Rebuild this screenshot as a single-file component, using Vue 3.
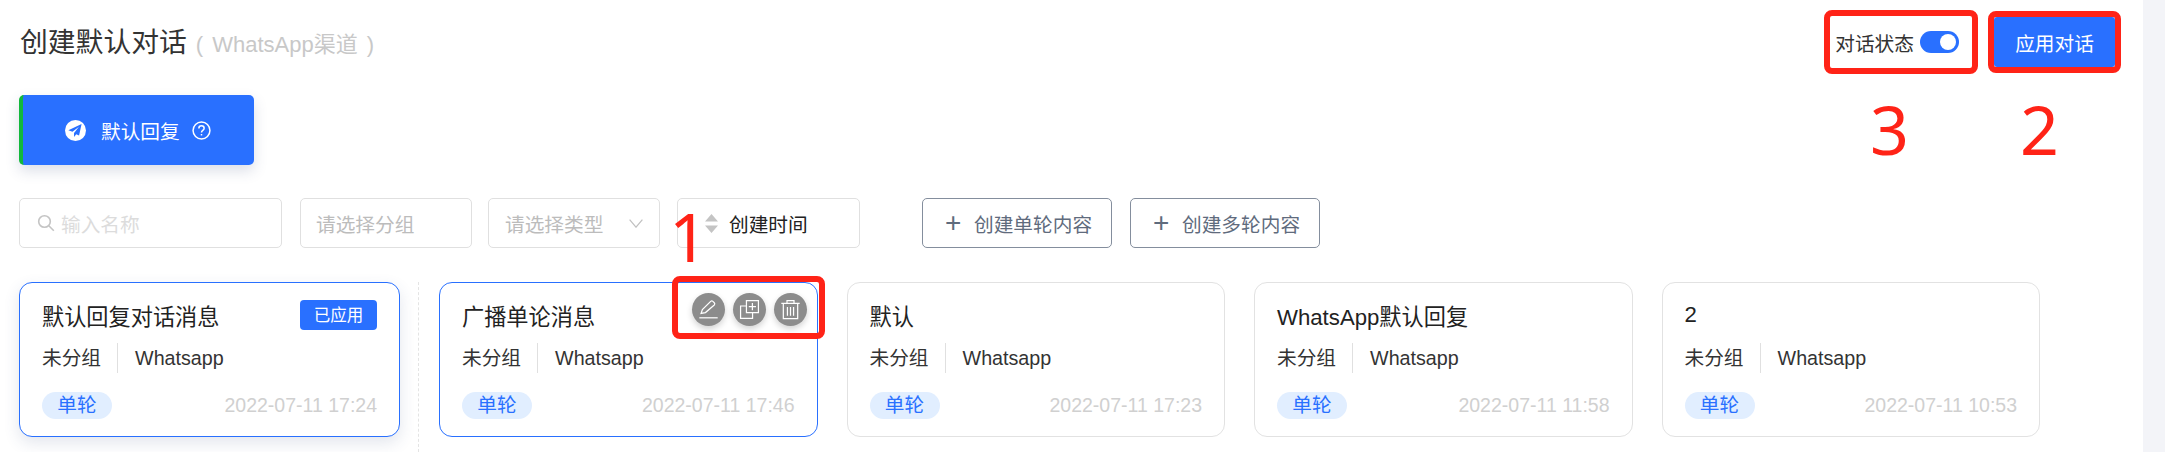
<template>
  <div class="page">
    <div class="main">
      <header class="head">
        <h1 class="title">创建默认对话<span class="sub">( WhatsApp渠道 )</span></h1>
        <div class="head-right">
          <span class="state-label">对话状态</span>
          <span class="toggle"><i /></span>
          <button class="apply">应用对话</button>
        </div>
      </header>

      <div class="reply-tab">
        <svg class="plane" viewBox="0 0 20 20">
          <circle cx="10" cy="10" r="10" fill="#fff" />
          <path d="M15.800 3.800 3.200 9.800l3.900 1.500 6.200-4.800-4.700 5.800v3.900l2.100-2.600 2.700 1.200z" fill="#2970ff" />
        </svg>
        <span class="reply-text">默认回复</span>
        <svg class="help" viewBox="0 0 18 18" fill="none" stroke="#fff" stroke-width="1.4">
          <circle cx="9" cy="9" r="8" />
          <path d="M6.500 7c0-1.400 1.100-2.400 2.500-2.400s2.500 1 2.500 2.300c0 2-2.500 2-2.500 3.900" />
          <path d="M9 12.300v1.400" />
        </svg>
      </div>

      <div class="filters">
        <div class="field search">
          <svg viewBox="0 0 18 18" fill="none" stroke="#c4c4c4" stroke-width="1.6">
            <circle cx="7.500" cy="7.500" r="5.800" />
            <path d="m11.800 11.800 5 5" />
          </svg>
          <span>输入名称</span>
        </div>
        <div class="field group"><span>请选择分组</span></div>
        <div class="field kind">
          <span>请选择类型</span>
          <svg viewBox="0 0 14 9" fill="none" stroke="#c0c0c0" stroke-width="1.2"><path d="m.6.6 6.400 7.600L13.400.6" /></svg>
        </div>
        <div class="field sort">
          <svg viewBox="0 0 13 19" fill="#c4c4c4"><path d="M6.500 0 13 7.500H0zM0 11.500h13L6.500 19z" /></svg>
          <span>创建时间</span>
        </div>
        <button class="add first"><b>+</b>创建单轮内容</button>
        <button class="add"><b>+</b>创建多轮内容</button>
      </div>

      <div class="cards">
        <template v-for="(c, i) in cards" :key="c.title">
          <article class="card" :class="{ active: i < 2, lead: i === 0 }">
            <div class="card-top">
              <span class="card-title">{{ c.title }}</span>
              <span v-if="c.applied" class="badge">已应用</span>
              <div v-if="c.tools" class="tools">
                <span class="tool">
                  <svg viewBox="0 0 24 24" fill="none" stroke="#fff" stroke-width="1.400">
                    <path d="M3.500 16.500 5 12 14.500 2.700a1.800 1.800 0 0 1 2.500 0l1.600 1.600a1.800 1.800 0 0 1 0 2.500L8.500 15.500z" />
                    <path d="M1.500 21.500h21" />
                  </svg>
                </span>
                <span class="tool">
                  <svg viewBox="0 0 24 24" fill="none" stroke="#fff" stroke-width="1.400">
                    <path d="M8.500 1.800h13.700v13.700H8.500z" />
                    <path d="M8.500 8H1.800v14.200h13.700v-6.700" />
                    <path d="M15.300 4.500v8.300M11.200 8.600h8.200" />
                  </svg>
                </span>
                <span class="tool">
                  <svg viewBox="0 0 24 24" fill="none" stroke="#fff" stroke-width="1.400">
                    <path d="M1.500 5h21M8 5V1.800h8V5" />
                    <path d="M3.800 5v17.500h16.400V5" />
                    <path d="M8.500 9v10M12 9v10M15.500 9v10" />
                  </svg>
                </span>
              </div>
            </div>
            <div class="meta">
              <span class="meta-group">未分组</span>
              <span class="meta-channel">Whatsapp</span>
            </div>
            <div class="card-foot">
              <span class="pill">单轮</span>
              <span class="date">{{ c.date }}</span>
            </div>
          </article>
          <div v-if="i === 0" class="dash" />
        </template>
      </div>
    </div>
    <div class="rail" />

    <!-- 标注 -->
    <div class="mark box-1" />
    <div class="mark box-2" />
    <div class="mark box-3" />
    <span class="num num-1">1</span>
    <span class="num num-2">2</span>
    <span class="num num-3">3</span>
  </div>
</template>

<script setup>
const cards = [
  { title: '默认回复对话消息', date: '2022-07-11 17:24', applied: true },
  { title: '广播单论消息', date: '2022-07-11 17:46', tools: true },
  { title: '默认', date: '2022-07-11 17:23' },
  { title: 'WhatsApp默认回复', date: '2022-07-11 11:58' },
  { title: '2', date: '2022-07-11 10:53' }
]
</script>

<style scoped>
.page {
  position: relative;
  display: flex;
  width: 2165px;
  height: 452px;
  overflow: hidden;
  background: #fff;
  font-family: "Liberation Sans", "Noto Sans CJK SC", sans-serif;
  font-size: 19.7px;
  color: #333;
}
.main {
  flex: 1;
  min-width: 0;
  padding: 17px 28px 0 19px;
}
.rail {
  width: 22px;
  background: #f3f4f8;
}
.head {
  display: flex;
  justify-content: space-between;
  align-items: center;
  height: 50px;
}
.title {
  margin: -4px 0 0 1px;
  font-size: 27.8px;
  font-weight: 400;
  color: #333;
}
.sub {
  margin-left: 9px;
  font-size: 22px;
  word-spacing: 3px;
  color: #c8c8c8;
}
.head-right {
  display: flex;
  align-items: center;
}
.state-label {
  color: #333;
}
.toggle {
  display: flex;
  align-items: center;
  justify-content: flex-end;
  width: 39px;
  height: 22px;
  margin: 0 35px 0 6px;
  padding-right: 3px;
  box-sizing: border-box;
  border-radius: 11px;
  background: #2970ff;
}
.toggle i {
  width: 16px;
  height: 16px;
  border-radius: 50%;
  background: #fff;
}
.apply {
  width: 121px;
  height: 50px;
  border: 0;
  border-radius: 3px;
  background: #2970ff;
  color: #fff;
  font: inherit;
}
.reply-tab {
  display: flex;
  align-items: center;
  width: 235px;
  height: 70px;
  margin-top: 28px;
  padding-left: 42px;
  box-sizing: border-box;
  border-left: 4px solid #12b83c;
  border-radius: 5px;
  background: #2970ff;
  box-shadow: 0 6px 14px rgba(60, 80, 130, 0.18);
  color: #fff;
}
.plane {
  width: 21px;
  height: 21px;
}
.reply-text {
  margin-left: 15px;
}
.help {
  width: 19px;
  height: 19px;
  margin-left: 12px;
}
.filters {
  display: flex;
  margin-top: 33px;
}
.field {
  display: flex;
  align-items: center;
  height: 50px;
  box-sizing: border-box;
  border: 1px solid #e0e0e0;
  border-radius: 5px;
  color: #bcbcbc;
}
.search {
  width: 263px;
  padding-left: 17px;
  color: #dcdcdc;
}
.search svg {
  width: 18px;
  height: 18px;
  margin-right: 6px;
}
.group {
  width: 172px;
  margin-left: 18px;
  padding-left: 15px;
}
.kind {
  justify-content: space-between;
  width: 172px;
  margin-left: 16px;
  padding: 0 16px;
}
.kind svg {
  width: 14px;
  height: 9px;
}
.sort {
  width: 183px;
  margin-left: 17px;
  padding-left: 27px;
  color: #222;
}
.sort svg {
  width: 13px;
  height: 19px;
  margin-right: 11px;
}
.add {
  display: flex;
  align-items: center;
  width: 190px;
  height: 50px;
  margin-left: 18px;
  padding: 0 0 0 23px;
  border: 1px solid #848e9d;
  border-radius: 5px;
  background: #fff;
  color: #5f6b7d;
  font: inherit;
}
.add.first {
  margin-left: 62px;
}
.add b {
  width: 29px;
  margin-left: -1px;
  font-size: 28px;
  font-weight: 400;
  line-height: 1;
  text-align: left;
}
.cards {
  display: flex;
  gap: 29px;
  margin-top: 34px;
}
.card {
  flex: none;
  width: 378.5px;
  height: 155px;
  padding: 17px 22px 0 22px;
  box-sizing: border-box;
  border: 1px solid #e2e2e2;
  border-radius: 13px;
  background: #fff;
}
.card.active {
  border-color: #2970ff;
}
.card.lead {
  width: 381px;
  margin-right: -11px;
  box-shadow: 0 6px 16px rgba(60, 80, 130, 0.14);
}
.dash {
  flex: none;
  width: 0;
  height: 170px;
  margin-right: -9px;
  border-left: 1px dashed #e4e4e4;
}
.card-top {
  display: flex;
  align-items: center;
  justify-content: space-between;
  height: 30px;
}
.card-title {
  font-size: 22.2px;
  color: #222;
}
.badge {
  width: 77px;
  height: 30px;
  border-radius: 4px;
  background: #2970ff;
  color: #fff;
  font-size: 16.5px;
  line-height: 30px;
  text-align: center;
}
.tools {
  display: flex;
  gap: 8px;
  margin: -12px -12px 0 0;
}
.tool {
  display: flex;
  align-items: center;
  justify-content: center;
  width: 33px;
  height: 33px;
  border-radius: 50%;
  background: #8c8c8c;
  box-shadow: 0 3px 6px rgba(0, 0, 0, 0.18);
}
.tool svg {
  width: 21px;
  height: 21px;
}
.meta {
  display: flex;
  align-items: center;
  height: 30px;
  margin-top: 13px;
}
.meta-group {
  padding-right: 16px;
  border-right: 1px solid #e0e0e0;
  line-height: 30px;
}
.meta-channel {
  margin-left: 17px;
}
.card-foot {
  display: flex;
  align-items: center;
  justify-content: space-between;
  height: 27px;
  margin-top: 19px;
}
.pill {
  width: 70px;
  height: 27px;
  border-radius: 14px;
  background: #e1eeff;
  color: #2970ff;
  line-height: 27px;
  text-align: center;
}
.date {
  font-size: 19.5px;
  color: #d0d0d0;
}
.mark {
  position: absolute;
  box-sizing: border-box;
  border: 6px solid #ff2317;
  border-radius: 8px;
}
.box-1 {
  left: 672px;
  top: 276px;
  width: 153px;
  height: 63px;
}
.box-2 {
  left: 1988px;
  top: 11px;
  width: 133px;
  height: 62px;
}
.box-3 {
  left: 1824px;
  top: 10px;
  width: 154px;
  height: 64px;
}
.num {
  position: absolute;
  font-family: "Noto Sans", sans-serif;
  font-size: 68px;
  font-weight: 400;
  line-height: 68px;
  color: #ff2317;
}
.num-1 {
  left: 669px;
  top: 202px;
}
.num-2 {
  left: 2020px;
  top: 95px;
}
.num-3 {
  left: 1870px;
  top: 95px;
}
</style>
